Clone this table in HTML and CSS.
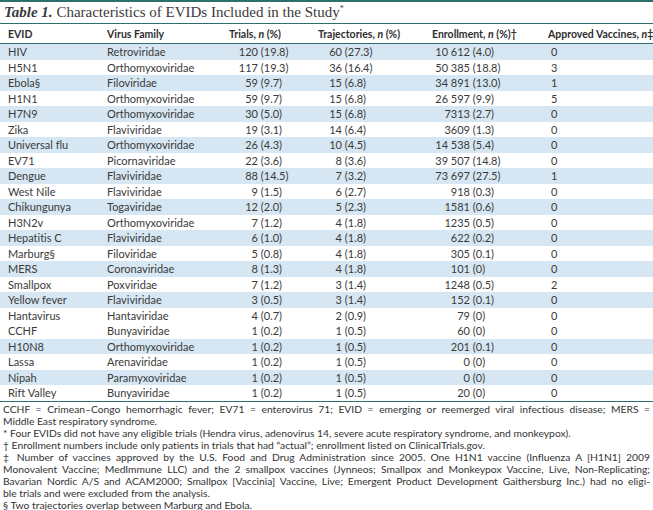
FILE: index.html
```html
<!DOCTYPE html>
<html lang="en">
<head>
<meta charset="utf-8">
<title>Table 1</title>
<link rel="stylesheet" href="styles.css">
</head>
<body>
<div class="page">
  <div class="caption"><b><i>Table 1.</i></b> Characteristics of EVIDs Included in the Study<sup>*</sup></div>
  <table class="tbl">
    <colgroup>
      <col class="c1"><col class="c2"><col class="c3"><col class="c4"><col class="c5"><col class="c6">
    </colgroup>
    <thead>
      <tr>
        <th class="h1">EVID</th>
        <th class="h2">Virus Family</th>
        <th class="h3">Trials, <i>n</i> (%)</th>
        <th class="h4">Trajectories, <i>n</i> (%)</th>
        <th class="h5">Enrollment, <i>n</i> (%)†</th>
        <th class="h6">Approved Vaccines, <i>n</i>‡</th>
      </tr>
    </thead>
    <tbody>
      <tr class="s"><td>HIV</td><td>Retroviridae</td><td class="t"><span class="n">120</span> (19.8)</td><td class="j"><span class="n">60</span> (27.3)</td><td class="e"><span class="n">10 612</span> (4.0)</td><td class="v">0</td></tr>
      <tr><td>H5N1</td><td>Orthomyxoviridae</td><td class="t"><span class="n">117</span> (19.3)</td><td class="j"><span class="n">36</span> (16.4)</td><td class="e"><span class="n">50 385</span> (18.8)</td><td class="v">3</td></tr>
      <tr class="s"><td>Ebola§</td><td>Filoviridae</td><td class="t"><span class="n">59</span> (9.7)</td><td class="j"><span class="n">15</span> (6.8)</td><td class="e"><span class="n">34 891</span> (13.0)</td><td class="v">1</td></tr>
      <tr><td>H1N1</td><td>Orthomyxoviridae</td><td class="t"><span class="n">59</span> (9.7)</td><td class="j"><span class="n">15</span> (6.8)</td><td class="e"><span class="n">26 597</span> (9.9)</td><td class="v">5</td></tr>
      <tr class="s"><td>H7N9</td><td>Orthomyxoviridae</td><td class="t"><span class="n">30</span> (5.0)</td><td class="j"><span class="n">15</span> (6.8)</td><td class="e"><span class="n">7313</span> (2.7)</td><td class="v">0</td></tr>
      <tr><td>Zika</td><td>Flaviviridae</td><td class="t"><span class="n">19</span> (3.1)</td><td class="j"><span class="n">14</span> (6.4)</td><td class="e"><span class="n">3609</span> (1.3)</td><td class="v">0</td></tr>
      <tr class="s"><td>Universal flu</td><td>Orthomyxoviridae</td><td class="t"><span class="n">26</span> (4.3)</td><td class="j"><span class="n">10</span> (4.5)</td><td class="e"><span class="n">14 538</span> (5.4)</td><td class="v">0</td></tr>
      <tr><td>EV71</td><td>Picornaviridae</td><td class="t"><span class="n">22</span> (3.6)</td><td class="j"><span class="n">8</span> (3.6)</td><td class="e"><span class="n">39 507</span> (14.8)</td><td class="v">0</td></tr>
      <tr class="s"><td>Dengue</td><td>Flaviviridae</td><td class="t"><span class="n">88</span> (14.5)</td><td class="j"><span class="n">7</span> (3.2)</td><td class="e"><span class="n">73 697</span> (27.5)</td><td class="v">1</td></tr>
      <tr><td>West Nile</td><td>Flaviviridae</td><td class="t"><span class="n">9</span> (1.5)</td><td class="j"><span class="n">6</span> (2.7)</td><td class="e"><span class="n">918</span> (0.3)</td><td class="v">0</td></tr>
      <tr class="s"><td>Chikungunya</td><td>Togaviridae</td><td class="t"><span class="n">12</span> (2.0)</td><td class="j"><span class="n">5</span> (2.3)</td><td class="e"><span class="n">1581</span> (0.6)</td><td class="v">0</td></tr>
      <tr><td>H3N2v</td><td>Orthomyxoviridae</td><td class="t"><span class="n">7</span> (1.2)</td><td class="j"><span class="n">4</span> (1.8)</td><td class="e"><span class="n">1235</span> (0.5)</td><td class="v">0</td></tr>
      <tr class="s"><td>Hepatitis C</td><td>Flaviviridae</td><td class="t"><span class="n">6</span> (1.0)</td><td class="j"><span class="n">4</span> (1.8)</td><td class="e"><span class="n">622</span> (0.2)</td><td class="v">0</td></tr>
      <tr><td>Marburg§</td><td>Filoviridae</td><td class="t"><span class="n">5</span> (0.8)</td><td class="j"><span class="n">4</span> (1.8)</td><td class="e"><span class="n">305</span> (0.1)</td><td class="v">0</td></tr>
      <tr class="s"><td>MERS</td><td>Coronaviridae</td><td class="t"><span class="n">8</span> (1.3)</td><td class="j"><span class="n">4</span> (1.8)</td><td class="e"><span class="n">101</span> (0)</td><td class="v">0</td></tr>
      <tr><td>Smallpox</td><td>Poxviridae</td><td class="t"><span class="n">7</span> (1.2)</td><td class="j"><span class="n">3</span> (1.4)</td><td class="e"><span class="n">1248</span> (0.5)</td><td class="v">2</td></tr>
      <tr class="s"><td>Yellow fever</td><td>Flaviviridae</td><td class="t"><span class="n">3</span> (0.5)</td><td class="j"><span class="n">3</span> (1.4)</td><td class="e"><span class="n">152</span> (0.1)</td><td class="v">0</td></tr>
      <tr><td>Hantavirus</td><td>Hantaviridae</td><td class="t"><span class="n">4</span> (0.7)</td><td class="j"><span class="n">2</span> (0.9)</td><td class="e"><span class="n">79</span> (0)</td><td class="v">0</td></tr>
      <tr><td>CCHF</td><td>Bunyaviridae</td><td class="t"><span class="n">1</span> (0.2)</td><td class="j"><span class="n">1</span> (0.5)</td><td class="e"><span class="n">60</span> (0)</td><td class="v">0</td></tr>
      <tr class="s"><td>H10N8</td><td>Orthomyxoviridae</td><td class="t"><span class="n">1</span> (0.2)</td><td class="j"><span class="n">1</span> (0.5)</td><td class="e"><span class="n">201</span> (0.1)</td><td class="v">0</td></tr>
      <tr><td>Lassa</td><td>Arenaviridae</td><td class="t"><span class="n">1</span> (0.2)</td><td class="j"><span class="n">1</span> (0.5)</td><td class="e"><span class="n">0</span> (0)</td><td class="v">0</td></tr>
      <tr class="s"><td>Nipah</td><td>Paramyxoviridae</td><td class="t"><span class="n">1</span> (0.2)</td><td class="j"><span class="n">1</span> (0.5)</td><td class="e"><span class="n">0</span> (0)</td><td class="v">0</td></tr>
      <tr><td>Rift Valley</td><td>Bunyaviridae</td><td class="t"><span class="n">1</span> (0.2)</td><td class="j"><span class="n">1</span> (0.5)</td><td class="e"><span class="n">20</span> (0)</td><td class="v">0</td></tr>
    </tbody>
  </table>
  <div class="notes">
    <p><span class="ln">CCHF = Crimean–Congo hemorrhagic fever; EV71 = enterovirus 71; EVID = emerging or reemerged viral infectious disease; MERS =</span><span class="last">Middle East respiratory syndrome.</span></p>
    <p><span class="last">* Four EVIDs did not have any eligible trials (Hendra virus, adenovirus 14, severe acute respiratory syndrome, and monkeypox).</span></p>
    <p><span class="last">† Enrollment numbers include only patients in trials that had “actual”; enrollment listed on ClinicalTrials.gov.</span></p>
    <p><span class="ln">‡ Number of vaccines approved by the U.S. Food and Drug Administration since 2005. One H1N1 vaccine (Influenza A [H1N1] 2009</span><span class="ln">Monovalent Vaccine; MedImmune LLC) and the 2 smallpox vaccines (Jynneos; Smallpox and Monkeypox Vaccine, Live, Non-Replicating;</span><span class="ln">Bavarian Nordic A/S and ACAM2000; Smallpox [Vaccinia] Vaccine, Live; Emergent Product Development Gaithersburg Inc.) had no eligi-</span><span class="last">ble trials and were excluded from the analysis.</span></p>
    <p><span class="last">§ Two trajectories overlap between Marburg and Ebola.</span></p>
  </div>
</div>
</body>
</html>
```

FILE: styles.css
```css
html, body {
  margin: 0;
  padding: 0;
  background: #ffffff;
}

.page {
  width: 653px;
  color: #3a3a3a;
  font-family: Lato, "Open Sans", sans-serif;
  font-variant-ligatures: none;
}

.caption {
  border-top: 2px solid #2f6f6b;
  border-bottom: 1.5px solid #2f6f6b;
  height: 21px;
  line-height: 21px;
  padding-left: 4px;
  font-family: "Liberation Serif", "DejaVu Serif", serif;
  font-size: 15px;
  color: #3a3a3a;
  white-space: nowrap;
}

.caption b {
  font-weight: bold;
}

.caption sup {
  font-size: 8px;
  line-height: 0;
  vertical-align: 6px;
}

.tbl {
  width: 653px;
  border-collapse: collapse;
  table-layout: fixed;
  font-size: 11px;
}

.c1 { width: 107px; }
.c2 { width: 103px; }
.c3 { width: 90px; }
.c4 { width: 120px; }
.c5 { width: 120px; }
.c6 { width: 113px; }

.tbl thead tr {
  border-bottom: 1px solid #2f6f6b;
}

.tbl th {
  height: 19px;
  padding: 0;
  text-align: left;
  font-weight: bold;
  font-size: 10.5px;
  color: #2e2e2e;
  white-space: nowrap;
}

.tbl th i {
  font-style: italic;
}

.h1 { padding-left: 8px !important; }
.h3 { padding-left: 19px !important; }
.h4 { padding-left: 18px !important; }
.h5 { padding-left: 12px !important; }
.h6 { padding-left: 8px !important; }

.tbl td {
  height: 15.5px;
  line-height: 15.5px;
  padding: 0;
  white-space: nowrap;
}

.tbl td:first-child {
  padding-left: 8px;
}

.tbl tbody tr.s {
  background: #d6e7f3;
}

.tbl tbody tr:last-child {
  border-bottom: 1px solid #2f6f6b;
}

.n {
  display: inline-block;
  text-align: right;
}

.t .n { width: 48px; }
.j .n { width: 42px; }
.e .n { width: 50px; }

.v {
  padding-left: 11px !important;
}

.notes {
  padding: 1px 3px 0 3px;
  font-size: 10.3px;
  line-height: 12px;
  color: #333333;
}

.notes p {
  margin: 0;
}

.ln {
  display: block;
  text-align: justify;
  text-align-last: justify;
}

.last {
  display: block;
  white-space: nowrap;
}
```
